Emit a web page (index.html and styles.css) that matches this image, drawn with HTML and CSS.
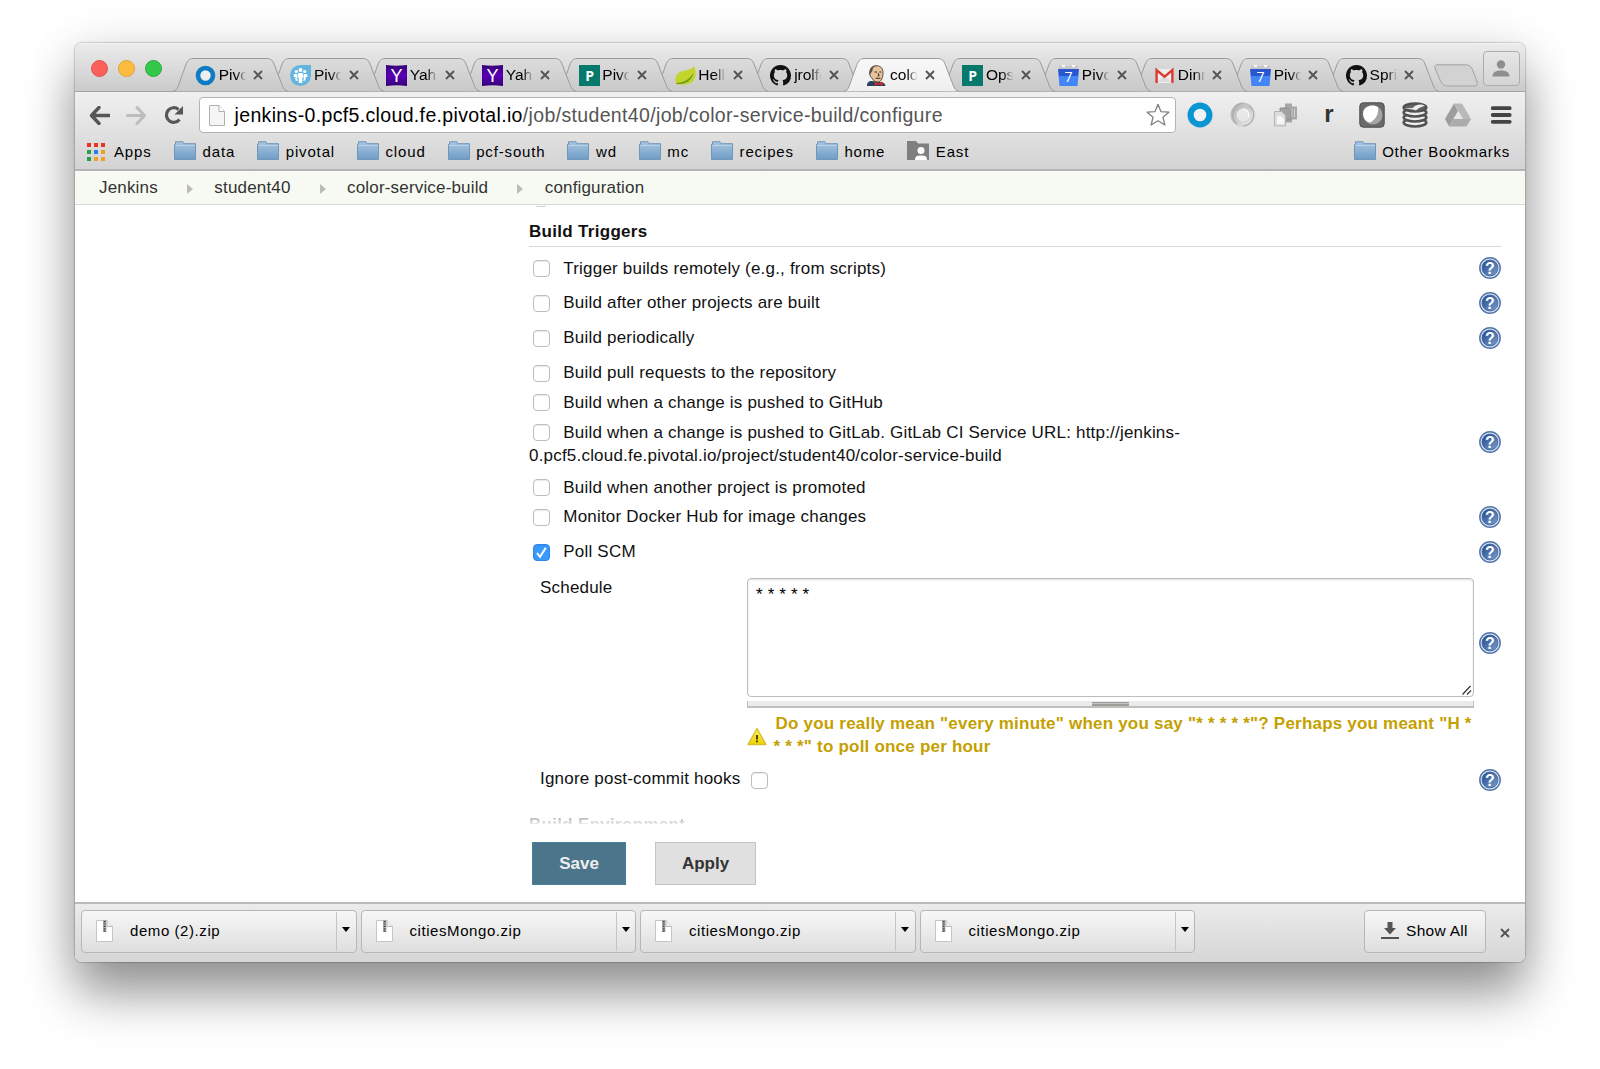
FILE: index.html
```html
<!DOCTYPE html>
<html lang="en">
<head>
<meta charset="utf-8">
<title>color-service-build Config [Jenkins]</title>
<link rel="stylesheet" href="styles.css">
</head>
<body>
<svg class="defs" width="0" height="0" aria-hidden="true">
  <defs>
    <linearGradient id="g-tab" x1="0" y1="0" x2="0" y2="1"><stop offset="0" stop-color="#dcdcdc"/><stop offset="1" stop-color="#c9c9c9"/></linearGradient>
    <linearGradient id="g-active" x1="0" y1="0" x2="0" y2="1"><stop offset="0" stop-color="#f8f8f8"/><stop offset="1" stop-color="#efefef"/></linearGradient>
    <linearGradient id="g-folder" x1="0" y1="0" x2="0" y2="1"><stop offset="0" stop-color="#a9c6e0"/><stop offset="1" stop-color="#6f9cc6"/></linearGradient>
    <linearGradient id="g-yahoo" x1="0" y1="0" x2="0" y2="1"><stop offset="0" stop-color="#330075"/><stop offset=".5" stop-color="#5a00b8"/><stop offset="1" stop-color="#330075"/></linearGradient>
    <linearGradient id="g-help" x1="0" y1="0" x2="1" y2="1"><stop offset="0" stop-color="#1f4788"/><stop offset="1" stop-color="#7ba0d0"/></linearGradient>
    <linearGradient id="g-warn" x1="0" y1="0" x2="0" y2="1"><stop offset="0" stop-color="#fdf06a"/><stop offset="1" stop-color="#eed300"/></linearGradient>
    <linearGradient id="g-grey" x1="0" y1="0" x2="1" y2="1"><stop offset="0" stop-color="#b5b5b5"/><stop offset="1" stop-color="#e6e6e6"/></linearGradient>
  </defs>
  <symbol id="tab" viewBox="0 0 115 34"><path d="M0 33.2C3 33 4 31 5 28.500L13 6.500C14.600 2.500 16.500.5 20 .5H94C98 .5 100 3 101 6L109.500 28C111 31.500 112 33 115 33.200" stroke="#9b9b9b"/></symbol>
  <symbol id="close" viewBox="0 0 10 10"><path d="M1 1l8 8M9 1l-8 8" stroke="#555" stroke-width="1.900" fill="none"/></symbol>
  <symbol id="ring" viewBox="0 0 21 21"><circle cx="10.500" cy="10.500" r="7.500" fill="#eee" stroke="#0d7cc3" stroke-width="4.600"/></symbol>
  <symbol id="people" viewBox="0 0 21 21"><path d="M10.500 0H21v10.500A10.500 10.500 0 1 1 10.500 0z" fill="#62b5de"/><g fill="#fff"><circle cx="10.500" cy="5" r="2"/><circle cx="6.300" cy="6.500" r="1.600"/><circle cx="14.700" cy="6.500" r="1.600"/><path d="M8.300 8h4.400l.6 4-1 1v5h-3.600v-5l-1-1zM4 9h3.300v5l.6 2-2.300-.5-.4-3.500L3.500 12zM17 9h-3.300v5l-.6 2 2.300-.5.400-3.500 1.700 0z"/></g></symbol>
  <symbol id="yahoo" viewBox="0 0 21 21"><path d="M0 0q10.500 1.400 21 0v21q-10.500-1.400-21 0z" fill="url(#g-yahoo)"/><text x="10.500" y="17" text-anchor="middle" font-family="Liberation Sans, sans-serif" font-size="18" letter-spacing="0" fill="#fff">Y</text></symbol>
  <symbol id="pgreen" viewBox="0 0 21 21"><path d="M0 0h21v21H0z" fill="#05796b"/><text x="10.700" y="15.500" text-anchor="middle" font-family="Open Sans, sans-serif" font-weight="700" font-size="14" fill="#fff">P</text></symbol>
  <symbol id="leaf" viewBox="0 0 21 21"><path d="M19 1c2 4 2.500 9 .5 13-2 4.500-7 6-11 5.500-3-.2-6 .8-7.500-.5C-.5 14 1 8.500 6 6.500 11 5 16 5.500 19 1z" fill="#c3d52b"/><path d="M1.500 17.800c6 .2 13-2.500 17-10.300-1.500 9-9 12-16.500 11.500z" fill="#6a9a1f"/></symbol>
  <symbol id="github" viewBox="0 0 16 16"><path fill="#111" d="M8 0C3.580 0 0 3.580 0 8c0 3.540 2.290 6.530 5.470 7.590.4.070.55-.17.55-.38 0-.19-.01-.82-.01-1.490-2.010.37-2.530-.49-2.690-.94-.09-.23-.48-.94-.82-1.130-.28-.15-.68-.52-.01-.53.63-.01 1.080.58 1.230.82.72 1.210 1.870.87 2.330.66.070-.52.28-.87.51-1.070-1.780-.2-3.640-.89-3.640-3.950 0-.87.31-1.590.82-2.150-.08-.2-.36-1.020.08-2.120 0 0 .67-.21 2.200.82.64-.18 1.320-.27 2-.27s1.360.09 2 .27c1.530-1.040 2.200-.82 2.200-.82.44 1.100.16 1.920.08 2.120.51.56.82 1.270.82 2.150 0 3.070-1.870 3.750-3.650 3.950.29.25.54.73.54 1.480 0 1.070-.01 1.930-.01 2.200 0 .21.15.46.55.38A8.010 8.010 0 0 0 16 8c0-4.420-3.580-8-8-8z"/></symbol>
  <symbol id="jenkins" viewBox="0 0 21 21"><path d="M1 21c0-4 2-5 5-5l7 1c4 0 6 1 6.500 4z" fill="#24435c"/><path d="M4.500 5C5.500 1.500 8 .6 11 .8c4.500.3 6 3.500 6 7.200s-1.500 9-5 9c-3 0-5-1.500-6-4C4 12 3 9 4.500 5z" fill="#e6c49c" stroke="#4b4038" stroke-width=".9"/><path d="M3.600 9.500C2.500 4 5.500.3 11 .4 7.500 1.500 6.600 3 6.300 6.500z" fill="#5b544e"/><path d="M8.500 7h2.500M13.300 7h2M12 8l1.200 2.800-1.700.3M9.500 13.300h5" stroke="#3a2d25" fill="none"/><path d="M9 16.800l3.500 1.500 4-1.800.5 4.200-4.500-1.400-4 1.700z" fill="#d8242b"/></symbol>
  <symbol id="cal" viewBox="0 0 21 21"><path d="M1 1h19v4H1z" fill="#c8c8c8"/><path d="M4 0h3v2H4zM14 0h3v2h-3z" fill="#f7f7f7"/><path d="M0 4h21l-.8 8H.8z" fill="#2a57cf"/><path d="M.6 11h19.800L19.500 21h-18z" fill="#4285f4"/><text x="10.500" y="17.300" text-anchor="middle" font-family="Open Sans, sans-serif" font-size="14" fill="#fff">7</text></symbol>
  <symbol id="gmail" viewBox="0 0 21 21"><path d="M2 4h17v14H2z" fill="#eee"/><path d="M3 17l7.500-6.500L18 17z" fill="#ddd"/><path d="M2.600 18V5l7.900 6.700L18.400 5v13" fill="none" stroke="#dc3b2e" stroke-width="2.400"/></symbol>
  <symbol id="folder" viewBox="0 0 22 19"><path d="M.5 18.500V3.500H1.500V.8H9l.8 1.900H21.500v15.800z" fill="url(#g-folder)" stroke="#7096b8"/><path d="M1 4.500h20" stroke="#b9d2e8"/></symbol>
  <symbol id="help" viewBox="0 0 22 22"><circle cx="11" cy="11" r="10.200" fill="#dfe8f4" stroke="#5577ac" stroke-width="1.500"/><circle cx="11" cy="11" r="8" fill="url(#g-help)" stroke="#3c609b" stroke-width=".8"/><text x="11" y="16.500" text-anchor="middle" font-family="Liberation Sans, sans-serif" font-weight="700" font-size="16" letter-spacing="0" fill="#fff">?</text></symbol>
  <symbol id="zip" viewBox="0 0 17 22"><path d="M.5.5H11l5.500 6v15H.5z" fill="#fff" stroke="#c5c5c5"/><path d="M11 .5v6h5.500" fill="#eee" stroke="#bbb"/><path d="M8.700 0v12" stroke="#aaa" stroke-width="3.400"/><path d="M8.700 1v11" stroke="#444" stroke-width="1.800" stroke-dasharray="1.200 1.200"/></symbol>
</svg>

<div class="window">
  <header class="tabstrip">
    <div class="lights"><i class="light red"></i><i class="light yellow"></i><i class="light green"></i></div>
    <nav class="tabs">
      <div class="tab"><svg class="shape"><use href="#tab"/></svg><svg class="fav"><use href="#ring"/></svg><span class="label">Pivo</span><svg class="x"><use href="#close"/></svg></div>
      <div class="tab"><svg class="shape"><use href="#tab"/></svg><svg class="fav nudge"><use href="#people"/></svg><span class="label">Pivo</span><svg class="x"><use href="#close"/></svg></div>
      <div class="tab"><svg class="shape"><use href="#tab"/></svg><svg class="fav nudge"><use href="#yahoo"/></svg><span class="label">Yaho</span><svg class="x"><use href="#close"/></svg></div>
      <div class="tab"><svg class="shape"><use href="#tab"/></svg><svg class="fav nudge"><use href="#yahoo"/></svg><span class="label">Yaho</span><svg class="x"><use href="#close"/></svg></div>
      <div class="tab"><svg class="shape"><use href="#tab"/></svg><svg class="fav"><use href="#pgreen"/></svg><span class="label">Pivo</span><svg class="x"><use href="#close"/></svg></div>
      <div class="tab"><svg class="shape"><use href="#tab"/></svg><svg class="fav"><use href="#leaf"/></svg><span class="label">Hello</span><svg class="x"><use href="#close"/></svg></div>
      <div class="tab"><svg class="shape"><use href="#tab"/></svg><svg class="fav"><use href="#github"/></svg><span class="label">jrolfe</span><svg class="x"><use href="#close"/></svg></div>
      <div class="tab active"><svg class="shape"><use href="#tab"/></svg><svg class="fav"><use href="#jenkins"/></svg><span class="label">color</span><svg class="x"><use href="#close"/></svg></div>
      <div class="tab"><svg class="shape"><use href="#tab"/></svg><svg class="fav"><use href="#pgreen"/></svg><span class="label">Ops</span><svg class="x"><use href="#close"/></svg></div>
      <div class="tab"><svg class="shape"><use href="#tab"/></svg><svg class="fav"><use href="#cal"/></svg><span class="label">Pivo</span><svg class="x"><use href="#close"/></svg></div>
      <div class="tab"><svg class="shape"><use href="#tab"/></svg><svg class="fav"><use href="#gmail"/></svg><span class="label">Dinn</span><svg class="x"><use href="#close"/></svg></div>
      <div class="tab"><svg class="shape"><use href="#tab"/></svg><svg class="fav"><use href="#cal"/></svg><span class="label">Pivo</span><svg class="x"><use href="#close"/></svg></div>
      <div class="tab"><svg class="shape"><use href="#tab"/></svg><svg class="fav"><use href="#github"/></svg><span class="label">Spri</span><svg class="x"><use href="#close"/></svg></div>
    </nav>
    <svg class="newtab" viewBox="0 0 44 23"><path d="M4 .8H31C35 .8 37 2 38.500 5.500L43 18c1 3-.5 4-3 4H14c-4 0-6-1.500-7.500-5L1.300 5C.2 2 1 .8 4 .8z" fill="#d2d2d2" stroke="#a2a2a2"/></svg>
    <div class="profile"><svg width="18" height="17" viewBox="0 0 18 17"><circle cx="9" cy="4.500" r="4.200" fill="#8e8e8e"/><path d="M.5 16.500c0-4.500 4-6 8.500-6s8.500 1.500 8.500 6z" fill="#8e8e8e"/></svg></div>
  </header>

  <div class="chrome">
    <div class="toolbar">
      <svg class="nav back" viewBox="0 0 21 19"><path d="M10 1.500L2.500 9.500l7.500 8M3 9.500h17" fill="none" stroke="#565656" stroke-width="3.400" stroke-linejoin="round" stroke-linecap="round"/></svg>
      <svg class="nav fwd" viewBox="0 0 21 19"><path d="M11 1.500l7.500 8-7.500 8M18 9.500H1.500" fill="none" stroke="#bdbdbd" stroke-width="3" stroke-linejoin="round" stroke-linecap="round"/></svg>
      <svg class="reload" viewBox="0 0 20 20"><path d="M15.500 14.500A7.300 7.300 0 1 1 14.500 4.500" fill="none" stroke="#565656" stroke-width="3.200"/><path d="M19 1v8.500h-8.500z" fill="#565656"/></svg>
      <div class="omnibox">
        <svg class="page" viewBox="0 0 16 21"><path d="M.5.5H10l5.500 6v14H.5z" fill="#f5f5f5" stroke="#b0b0b0"/><path d="M10 .5v6h5.500" fill="#fff" stroke="#b0b0b0"/></svg>
        <span class="url">jenkins-0.pcf5.cloud.fe.pivotal.io<span class="path">/job/student40/job/color-service-build/configure</span></span>
        <svg class="star" viewBox="0 0 24 24"><path d="M12 1.300l2.900 7.300 8 .6-6 5 2 7.800-6.900-4.200L5.100 22l2-7.800-6-5 8-.6z" fill="#fff" stroke="#808080" stroke-width="1.300" stroke-linejoin="round"/></svg>
      </div>
      <div class="exts">
        <svg viewBox="0 0 26 26"><circle cx="13" cy="13" r="9.400" fill="#f2f2f2" stroke="#0b95d2" stroke-width="6.200"/></svg>
        <svg viewBox="0 0 26 26"><circle cx="13" cy="13" r="9.500" fill="none" stroke="url(#g-grey)" stroke-width="6"/><path d="M13 1a12 12 0 0 0-6 21M19 4a11 11 0 0 1-6 20" fill="none" stroke="#a9a9a9" stroke-width="1.200"/><path d="M13 7a6 6 0 0 1 5 9" fill="none" stroke="#fff" stroke-width="1.200"/></svg>
        <svg viewBox="0 0 26 26"><path d="M12 1.500h7v3h5v13h-5v3h-6v-6h-3v-9h2z" fill="#a8a8a8"/><path d="M7 6h8l3 3v9H7z" fill="#a2a2a2" stroke="#888" stroke-width=".8"/><path d="M1.500 9.500h7l4 4v10.500h-11z" fill="#ddd" stroke="#b5b5b5"/><path d="M4 14h4l3 3v5H4z" fill="#f7f7f7"/><path d="M19 7v8M21.500 7v8" stroke="#d0d0d0"/></svg>
        <svg viewBox="0 0 26 26"><text x="13" y="19.800" text-anchor="middle" font-family="Liberation Sans, sans-serif" font-weight="700" font-size="24" fill="#333">r</text></svg>
        <svg viewBox="0 0 26 26"><rect x=".8" y=".8" width="24.400" height="24.400" rx="3.500" fill="#6a6a6a" stroke="#4b4b4b"/><circle cx="14" cy="13" r="9.500" fill="#a5a5a5"/><path d="M4.500 8.500c3-6 11-6 14.500-3.500 1 6-2 13-8 15.500-6-1-8-7-6.500-12z" fill="#fff"/></svg>
        <svg viewBox="0 0 26 26"><g fill="#eee" stroke="#515151" stroke-width="2.600"><ellipse cx="13" cy="20.500" rx="11.300" ry="4"/><ellipse cx="13" cy="15.500" rx="11.300" ry="4"/><ellipse cx="13" cy="10.500" rx="11.300" ry="4"/><ellipse cx="13" cy="5.500" rx="11.300" ry="4" fill="#666"/></g><path d="M2 6.500l9-.5c2-3 7-4.500 12-2.500l-6 2.500-3 2.500-3-1z" fill="#eee"/></svg>
        <svg viewBox="0 0 26 26"><path d="M9 1.500h8L26 17h-8z" fill="#b9b9b9"/><path d="M9 1.500L0 17l4 7.500 9-15.500z" fill="#9d9d9d"/><path d="M4 24.500h17.500L26 17H8.500z" fill="#acacac"/></svg>
        <svg viewBox="0 0 26 26"><path d="M4.700 6.200h17M4.700 13h17M4.700 19.800h17" stroke="#444" stroke-width="3.800" stroke-linecap="round"/></svg>
      </div>
    </div>
    <div class="bookmarks">
      <span class="bm apps"><svg width="18" height="18" viewBox="0 0 18 18"><path d="M0 0h4v4H0zM7 0h4v4H7zM14 0h4v4h-4z" fill="#ea3323"/><path d="M0 7h4v4H0zM0 14h4v4H0z" fill="#2a9d4a"/><path d="M7 7h4v4H7z" fill="#2a7de1"/><path d="M14 7h4v4h-4zM7 14h4v4H7zM14 14h4v4h-4z" fill="#f0a01e"/></svg>Apps</span>
      <span class="bm"><svg class="fold"><use href="#folder"/></svg>data</span>
      <span class="bm"><svg class="fold"><use href="#folder"/></svg>pivotal</span>
      <span class="bm"><svg class="fold"><use href="#folder"/></svg>cloud</span>
      <span class="bm"><svg class="fold"><use href="#folder"/></svg>pcf-south</span>
      <span class="bm"><svg class="fold"><use href="#folder"/></svg>wd</span>
      <span class="bm"><svg class="fold"><use href="#folder"/></svg>mc</span>
      <span class="bm"><svg class="fold"><use href="#folder"/></svg>recipes</span>
      <span class="bm"><svg class="fold"><use href="#folder"/></svg>home</span>
      <span class="bm"><svg class="fold" viewBox="0 0 22 19"><path d="M0 19V0h9l2 2.500h11V19z" fill="#7f7f7f"/><circle cx="14" cy="9.500" r="3.500" fill="#fff"/><path d="M8 19c0-4 2.500-4.500 6-4.500s6 .5 6 4.500z" fill="#fff"/></svg>East</span>
      <span class="bm other"><svg class="fold"><use href="#folder"/></svg>Other Bookmarks</span>
    </div>
  </div>

  <nav class="crumbs">
    <a>Jenkins</a><i class="sep"></i><a>student40</a><i class="sep"></i><a>color-service-build</a><i class="sep"></i><a>configuration</a>
  </nav>

  <main class="page-body">
    <div class="cut-box"></div>
    <h2 class="section">Build Triggers</h2>
    <div class="row"><label class="opt"><i class="cb"></i>Trigger builds remotely (e.g., from scripts)</label><svg class="help"><use href="#help"/></svg></div>
    <div class="row"><label class="opt"><i class="cb"></i>Build after other projects are built</label><svg class="help"><use href="#help"/></svg></div>
    <div class="row"><label class="opt"><i class="cb"></i>Build periodically</label><svg class="help"><use href="#help"/></svg></div>
    <div class="row plain"><label class="opt"><i class="cb"></i>Build pull requests to the repository</label></div>
    <div class="row plain"><label class="opt"><i class="cb"></i>Build when a change is pushed to GitHub</label></div>
    <div class="row tall"><label class="opt"><i class="cb"></i>Build when a change is pushed to GitLab. GitLab CI Service URL: http://jenkins-<br>0.pcf5.cloud.fe.pivotal.io/project/student40/color-service-build</label><svg class="help"><use href="#help"/></svg></div>
    <div class="row plain"><label class="opt"><i class="cb"></i>Build when another project is promoted</label></div>
    <div class="row"><label class="opt"><i class="cb"></i>Monitor Docker Hub for image changes</label><svg class="help"><use href="#help"/></svg></div>
    <div class="row"><label class="opt"><i class="cb on"><svg viewBox="0 0 17 17"><path d="M4 9l3 3.800 5.800-9" fill="none" stroke="#fff" stroke-width="2"/></svg></i>Poll SCM</label><svg class="help"><use href="#help"/></svg></div>
    <div class="schedule">
      <span class="name">Schedule</span>
      <div class="field">
        <div class="area">* * * * *<svg class="resize" viewBox="0 0 10 10"><path d="M.5 9.500l8-8.500M5 9.500l4-4" stroke="#333" stroke-width="1.200"/></svg></div>
        <div class="handle"><i class="grip"></i></div>
      </div>
      <svg class="help"><use href="#help"/></svg>
    </div>
    <div class="warning">
      <svg class="warn" viewBox="0 0 20 19"><path d="M10 1.500L19 17.500H1z" fill="url(#g-warn)" stroke="#d9bf2a" stroke-width="1.400" stroke-linejoin="round"/><path d="M10 8v4.500M10 13.500v1.800" stroke="#4a4400" stroke-width="2"/></svg>
      <p class="warn-text"><span class="first">Do you really mean "every minute" when you say "* * * * *"? Perhaps you meant "H *</span><br>* * *" to poll once per hour</p>
    </div>
    <div class="ignore"><span>Ignore post-commit hooks</span><i class="cb"></i><svg class="help"><use href="#help"/></svg></div>
    <h2 class="next">Build Environment</h2>
    <div class="buttons"><button class="btn save">Save</button><button class="btn apply">Apply</button></div>
  </main>

  <footer class="shelf">
    <div class="dl"><span class="file"><svg class="zip"><use href="#zip"/></svg>demo (2).zip</span><span class="drop"></span></div>
    <div class="dl"><span class="file"><svg class="zip"><use href="#zip"/></svg>citiesMongo.zip</span><span class="drop"></span></div>
    <div class="dl"><span class="file"><svg class="zip"><use href="#zip"/></svg>citiesMongo.zip</span><span class="drop"></span></div>
    <div class="dl"><span class="file"><svg class="zip"><use href="#zip"/></svg>citiesMongo.zip</span><span class="drop"></span></div>
    <div class="showall"><svg width="18" height="17" viewBox="0 0 18 17"><path d="M6.500 0h5v6H15l-6 6.500L3 6h3.500z" fill="#555"/><path d="M0 16h18" stroke="#222" stroke-width="1.600"/></svg>Show All</div>
    <svg class="x shelf-x"><use href="#close"/></svg>
  </footer>
</div>
</body>
</html>
```
FILE: styles.css
```css
* { box-sizing: border-box; }
body {
  margin: 0;
  width: 1600px;
  height: 1069px;
  padding: 43px 75px 0;
  overflow: hidden;
  background: #fff;
  font: 17px/23px "Liberation Sans", Arial, sans-serif;
  letter-spacing: .2px;
  color: #111;
}
svg { display: block; flex: none; }
.defs { position: absolute; }
.window {
  display: flex;
  flex-direction: column;
  width: 1450px;
  height: 919px;
  overflow: hidden;
  border-radius: 7px;
  background: #fff;
  box-shadow: 0 0 1px 1px rgba(0, 0, 0, .17), 0 32px 50px rgba(0, 0, 0, .4), 0 2px 50px rgba(0, 0, 0, .1);
}

/* tab strip */
.tabstrip {
  display: flex;
  height: 49px;
  flex: none;
  background: linear-gradient(#ececec, #cbcbcb);
  border-bottom: 1px solid #a3a3a3;
  box-shadow: inset 0 1px #f4f4f4;
}
.lights { display: flex; gap: 10px; padding: 17px 0 0 16px; width: 98px; flex: none; }
.light { width: 17px; height: 17px; border-radius: 50%; border: 1px solid; }
.red { background: #fc605b; border-color: #e2504b; }
.yellow { background: #fdbc40; border-color: #e0a233; }
.green { background: #34c84a; border-color: #27ab38; }
.tabs { display: flex; flex: none; padding-top: 15px; }
.tab {
  position: relative;
  display: flex;
  align-items: center;
  width: 115px;
  height: 34px;
  flex: none;
  margin-right: -19.100px;
  padding-left: 22px;
}
.tab .shape { position: absolute; left: 0; top: 0; width: 115px; height: 34px; fill: url(#g-tab); }
.tab:nth-child(1) { z-index: 13; }
.tab:nth-child(2) { z-index: 12; }
.tab:nth-child(3) { z-index: 11; }
.tab:nth-child(4) { z-index: 10; }
.tab:nth-child(5) { z-index: 9; }
.tab:nth-child(6) { z-index: 8; }
.tab:nth-child(7) { z-index: 7; }
.tab:nth-child(9) { z-index: 6; }
.tab:nth-child(10) { z-index: 5; }
.tab:nth-child(11) { z-index: 4; }
.tab:nth-child(12) { z-index: 3; }
.tab:nth-child(13) { z-index: 2; }
.tab.active { z-index: 20; }
.tab.active .shape { fill: url(#g-active); }
.fav { position: relative; width: 21px; height: 21px; }
.nudge { margin: 0 .5px 0 -1.200px; }
.label {
  position: relative;
  width: 28px;
  margin-left: 2.700px;
  overflow: hidden;
  white-space: nowrap;
  font-size: 15.500px;
  line-height: 20px;
  letter-spacing: 0;
  color: #000;
  -webkit-mask-image: linear-gradient(90deg, #000 60%, transparent 98%);
  mask-image: linear-gradient(90deg, #000 60%, transparent 98%);
}
.x { position: relative; width: 10px; height: 10px; }
.tab .x { margin-left: 6.700px; }
.newtab { width: 44px; height: 23px; margin: 21px 0 0 14px; }
.profile {
  display: flex;
  align-items: center;
  justify-content: center;
  flex: none;
  width: 37px;
  height: 35px;
  margin: 8px 0 0 5px;
  border: 1px solid #adadad;
  border-radius: 4px;
  background: linear-gradient(#e6e6e6, #d4d4d4);
}

/* toolbar */
.chrome {
  height: 79px;
  flex: none;
  background: linear-gradient(#f0f0f0, #d3d3d3);
  border-bottom: 2px solid #b4b4b4;
}
.toolbar { display: flex; align-items: center; height: 46px; padding-left: 13.500px; }
.nav { width: 21px; height: 19px; }
.fwd { margin-left: 16px; }
.reload { width: 20px; height: 20px; margin-left: 17.500px; }
.omnibox {
  display: flex;
  align-items: center;
  width: 977px;
  height: 36px;
  margin-left: 14.500px;
  padding: 0 5px 0 9px;
  border: 1px solid #b3b3b3;
  border-radius: 4px;
  background: #fff;
}
.page { width: 16px; height: 21px; }
.url { flex: 1; margin-left: 10px; font-size: 19.500px; letter-spacing: .35px; color: #000; }
.path { color: #555; }
.star { width: 24px; height: 24px; }
.exts { display: flex; gap: 17px; margin-left: 11.500px; }
.exts svg { width: 26px; height: 26px; }
.bookmarks {
  display: flex;
  align-items: center;
  height: 27px;
  gap: 22px;
  padding: 0 15px 0 12px;
  font-size: 15px;
  letter-spacing: .85px;
  color: #000;
}
.bm { display: flex; align-items: center; gap: 6.500px; }
.apps { gap: 9px; margin-right: .5px; }
.fold { width: 22px; height: 19px; margin-top: -3px; }
.other { margin-left: auto; letter-spacing: .74px; }

/* breadcrumbs */
.crumbs {
  display: flex;
  align-items: center;
  height: 34px;
  flex: none;
  padding-left: 24px;
  background: #f6faf2;
  border-bottom: 1px solid #d3dacd;
  color: #333;
  letter-spacing: .17px;
}
.sep {
  margin: 2px 21.500px 0 29px;
  border: 5px solid transparent;
  border-left: 6px solid #bbb;
  border-right: 0;
}

/* form */
.page-body { flex: 1; min-height: 0; padding: 0 24px 0 454px; }
.cut-box { width: 10px; height: 2px; margin-left: 7px; border-bottom: 1px solid #ccc; border-radius: 0 0 6px 6px; }
.section {
  height: 40px;
  margin: 0 0 4.500px;
  padding-top: 12px;
  border-bottom: 1px solid #d8d8d8;
  font-size: 17px;
  line-height: 26px;
  letter-spacing: .3px;
}
.row { display: flex; align-items: center; justify-content: space-between; height: 34.900px; }
.row.plain { height: 29.700px; }
.row.tall { height: 55px; }
.opt { align-self: flex-start; padding-top: 5px; white-space: nowrap; }
.cb {
  display: inline-block;
  width: 17px;
  height: 17px;
  margin: 0 13.300px 0 4px;
  vertical-align: -3.500px;
  border: 1px solid #bdbdbd;
  border-radius: 4px;
  background: #fff;
  box-shadow: inset 0 1px 1px rgba(0, 0, 0, .08);
}
.cb.on { border-color: #2f86ee; background: #3b99fc; }
.cb.on svg { width: 17px; height: 17px; margin: -1px; }
.help { width: 22px; height: 22px; }
.row .help { margin-bottom: 1.500px; }
.schedule { display: flex; align-items: center; height: 138px; }
.name { align-self: flex-start; width: 218px; padding: 6px 0 0 11px; }
.field { align-self: flex-start; flex: none; width: 727px; padding-top: 8px; }
.area {
  position: relative;
  height: 119px;
  padding: 6px 8px;
  border: 1px solid #bdbdbd;
  border-radius: 4px;
  box-shadow: inset 0 1px 2px rgba(0, 0, 0, .12);
  line-height: 20px;
  letter-spacing: .15px;
  color: #000;
}
.resize { position: absolute; right: 1px; bottom: 1px; width: 10px; height: 10px; }
.handle {
  display: flex;
  justify-content: center;
  height: 7px;
  margin-top: 4px;
  padding-top: 1px;
  background: #ebebeb;
  border: solid #bfc0bb;
  border-width: 0 1px 2px;
}
.grip { width: 37px; height: 4px; border: solid #9c9d98; border-width: 1px 0 2px; background: #c4c4c0; }
.schedule .help { margin: 8px 0 0 5px; }
.warning { display: flex; height: 55px; padding: 4px 0 0 218px; }
.warn { width: 20px; height: 19px; margin-top: 15px; }
.warn-text { margin: 0; padding-left: 6.500px; font-weight: 700; color: #c4a000; white-space: nowrap; letter-spacing: .21px; }
.first { margin-left: 2px; }
.ignore { display: flex; align-items: center; height: 35px; padding: 0 0 0 11px; }
.ignore span { margin-top: -4px; }
.ignore .cb { margin: 0 0 0 10.500px; }
.ignore .help { margin: 0 0 1px auto; }
.next {
  height: 8px;
  margin: 18px 0 0;
  overflow: hidden;
  font-size: 17px;
  line-height: 17px;
  letter-spacing: .3px;
  -webkit-mask-image: linear-gradient(rgba(0, 0, 0, .35), rgba(0, 0, 0, .1));
  mask-image: linear-gradient(rgba(0, 0, 0, .35), rgba(0, 0, 0, .1));
}
.buttons { display: flex; gap: 29px; padding: 18px 0 0 3px; }
.btn { height: 43px; padding: 0; border: 1px solid; font: bold 17px "Liberation Sans", Arial, sans-serif; }
.save { width: 94px; background: #4b758b; border-color: #4a7f9b; color: #eee; }
.apply { width: 101px; background: #e0e0e0; border-color: #c4c4c4; color: #333; }

/* downloads shelf */
.shelf {
  display: flex;
  height: 60px;
  flex: none;
  gap: 4px;
  padding: 5.500px 0 0 6px;
  border-top: 2px solid #b9b9b9;
  background: linear-gradient(#ebebeb, #d6d6d6);
  font-size: 15px;
  letter-spacing: .57px;
  color: #000;
}
.dl, .showall {
  display: flex;
  align-items: center;
  height: 43px;
  border: 1px solid #b7b7b7;
  border-radius: 4px;
  background: linear-gradient(#f7f7f7, #dedede);
}
.dl { width: 275.500px; }
.file { display: flex; align-items: center; flex: 1; height: 39px; padding: 0 0 1px 14px; gap: 17px; border-right: 1px solid #c4c4c4; }
.zip { width: 17px; height: 22px; }
.drop { display: flex; justify-content: center; width: 18.500px; }
.drop::before { content: ""; margin-top: -4px; border: 4px solid transparent; border-top: 5px solid #000; border-bottom: 0; }
.showall { width: 122px; margin-left: auto; padding: 0 0 1px 16px; gap: 7px; letter-spacing: .3px; font-size: 15.500px; }
.shelf-x { margin: 18px 15.500px 0 9.500px; }
```
